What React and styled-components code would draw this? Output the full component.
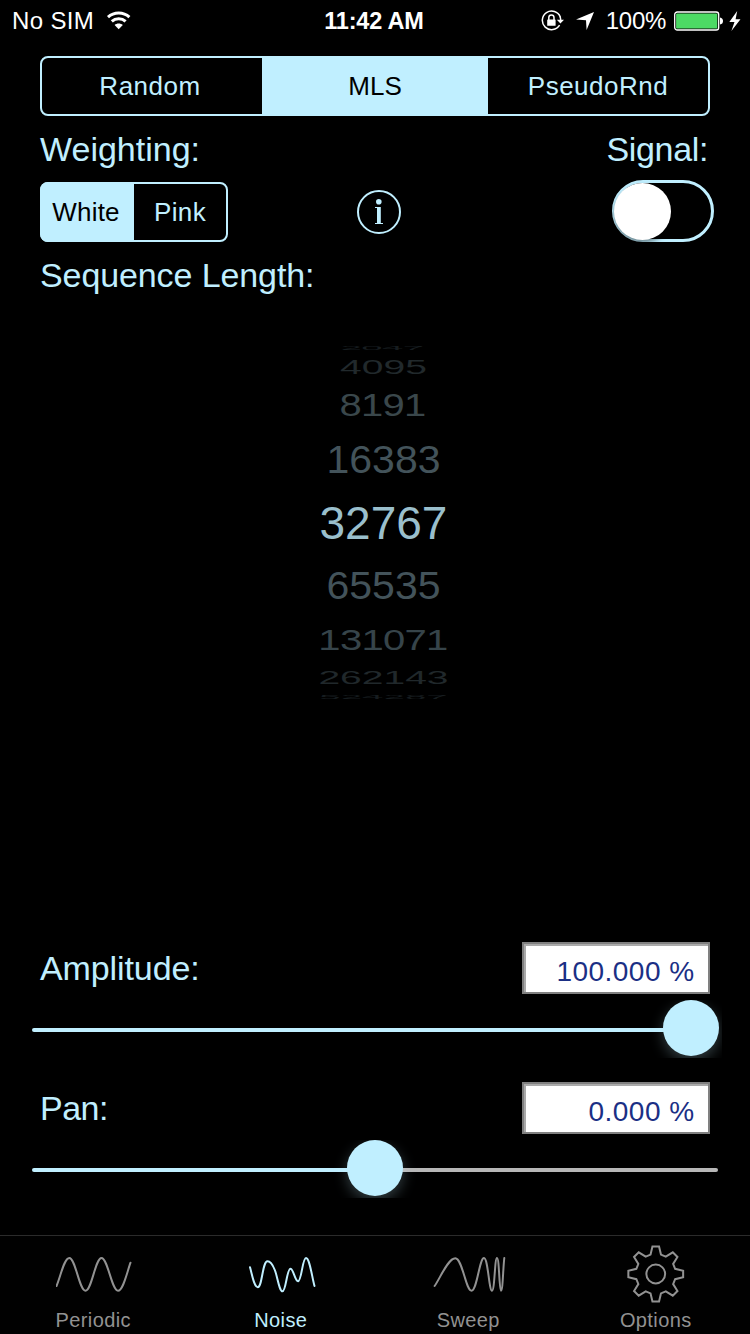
import React from "react";
import styled, { createGlobalStyle } from "styled-components";

const TINT = "#c0efff";
const MUTED = "#929292";

const GlobalStyle = createGlobalStyle`
  * { box-sizing: border-box; }
  body {
    margin: 0;
    background: #000;
    font-family: "Liberation Sans", Arial, sans-serif;
  }
`;

const Screen = styled.main`
  display: flex;
  flex-direction: column;
  width: 750px;
  height: 1334px;
  overflow: hidden;
  background: #000;
  color: ${TINT};
`;

const StatusBar = styled.header`
  display: grid;
  grid-template-columns: 1fr auto 1fr;
  align-items: center;
  height: 40px;
  padding: 2px 9px 0 12px;
  color: #fff;
  font-size: 24px;
  line-height: 38px;
`;

const StatusGroup = styled.div`
  display: flex;
  align-items: center;
  justify-content: ${(p) => (p.$end ? "flex-end" : "flex-start")};
  letter-spacing: ${(p) => (p.$end ? 0 : 0.35)}px;
`;

const Clock = styled.time`
  font-weight: 700;
  font-size: 23.5px;
  letter-spacing: -0.2px;
  padding-right: 5px;
`;

const WifiIcon = styled.svg`
  margin: 0 0 2px 12px;
`;

const StatusIcon = styled.svg`
  margin-right: ${(p) => p.$gap}px;
  margin-bottom: 1px;
`;

const Percent = styled.span`
  margin-right: 8px;
  letter-spacing: -0.3px;
`;

const Content = styled.section`
  display: flex;
  flex: 1;
  flex-direction: column;
  padding: 16px 40px 0;
`;

const Segments = styled.div`
  display: flex;
  width: ${(p) => p.$width}px;
  height: 60px;
  border: 2px solid ${TINT};
  border-radius: 8px;
`;

const Segment = styled.button`
  flex: ${(p) => (p.$width ? `0 0 ${p.$width}px` : "1")};
  padding: 0;
  border: 0;
  background: ${(p) => (p.$active ? TINT : "transparent")};
  color: ${(p) => (p.$active ? "#000" : TINT)};
  font: inherit;
  font-size: 26px;
  line-height: 56px;
  letter-spacing: ${(p) => p.$spacing ?? 0.4}px;

  &:first-child {
    flex-basis: ${(p) => p.$width + 2}px;
    margin: -2px 0 -2px -2px;
    padding-right: 2px;
    border-radius: 8px 0 0 8px;
  }
`;

const LabelRow = styled.div`
  display: flex;
  justify-content: space-between;
  align-items: center;
  height: ${(p) => p.$height}px;
  padding-right: ${(p) => p.$inset ?? 0}px;
`;

const Label = styled.span`
  font-size: 34px;
  line-height: 40px;
  letter-spacing: ${(p) => p.$spacing ?? 0}px;
`;

const ControlRow = styled.div`
  display: grid;
  grid-template-columns: 188px 1fr 102px;
  align-items: center;
  height: 60px;
  margin-right: -4px;
`;

const InfoButton = styled.svg`
  justify-self: center;
  margin-left: -82px;
`;

const Toggle = styled.div`
  display: flex;
  align-items: center;
  width: 102px;
  height: 62px;
  margin: -2px 0 0;
  border: 3px solid ${TINT};
  border-radius: 31px;
`;

const Knob = styled.div`
  flex: none;
  width: 57px;
  height: 57px;
  margin-left: -1px;
  border-radius: 50%;
  background: #fff;
  box-shadow: 0 3px 5px rgba(0, 0, 0, 0.45);
`;

const Picker = styled.div`
  display: flex;
  flex-direction: column;
  align-items: center;
  margin-top: 35.5px;
  padding-left: 17px;
  height: 598.5px;
`;

const PickerRow = styled.div`
  display: flex;
  align-items: center;
  justify-content: center;
  flex: none;
  height: ${(p) => p.$height}px;
  color: ${(p) => p.$color};
  font-size: ${(p) => p.$size}px;
  line-height: 0;
`;

const PickerValue = styled.span`
  letter-spacing: ${(p) => p.$spacing}px;
  margin-right: ${(p) => p.$shift ?? 0}px;
  transform: scaleY(${(p) => p.$squash});
`;

const ValueBox = styled.output`
  width: 188px;
  height: 52px;
  padding-right: 13.5px;
  border: 2px solid #808080;
  background: #fff;
  box-shadow: inset 2px 2px 0 #aaa;
  color: #1b2f85;
  font-size: 28px;
  line-height: 55px;
  text-align: right;
  letter-spacing: 0.45px;
`;

const SliderArea = styled.div`
  position: relative;
  display: flex;
  align-items: center;
  height: 60px;
  margin: 6px -12px 22px -8px;
  padding-right: 4px;
`;

const ThumbLayer = styled.div`
  position: absolute;
  inset: 0 0 2px;
  overflow: hidden;
`;

const Track = styled.div`
  flex: 1;
  height: 4px;
  border-radius: 2px;
  background: linear-gradient(to right, ${TINT} ${(p) => p.$fill}%, #b7b7b7 ${(p) => p.$fill}%);
`;

const Thumb = styled.div`
  width: 56px;
  height: 56px;
  margin-left: ${(p) => p.$left}px;
  border-radius: 50%;
  background: ${TINT};
  box-shadow: 0 5px 14px rgba(192, 239, 255, 0.26);
`;

const TabBar = styled.nav`
  display: grid;
  grid-template-columns: repeat(4, 1fr);
  height: 99px;
  border-top: 1px solid #2b2b2b;
  background: #010101;
`;

const Tab = styled.div`
  display: flex;
  flex-direction: column;
  align-items: center;
  padding-top: 8px;
  color: ${(p) => (p.$active ? TINT : MUTED)};
  font-size: 20px;
  line-height: 24px;
  letter-spacing: 0.4px;
`;

const TabIcon = styled.svg`
  margin-bottom: 4px;
  fill: none;
  stroke: currentColor;
  stroke-width: 2;
  stroke-linecap: round;
`;

const TabName = styled.span`
  margin-right: 1px;
`;

const PICKER_ROWS = [
  { value: "2047", height: 8.6, size: 38.5, squash: 0.15, color: "#161c1f", spacing: -0.6, shift: 3 },
  { value: "4095", height: 29.4, size: 39, squash: 0.5, color: "#21292c", spacing: 0 },
  { value: "8191", height: 47.6, size: 40, squash: 0.77, color: "#3a474b", spacing: -0.8, shift: 2 },
  { value: "16383", height: 61.4, size: 41, squash: 0.95, color: "#43535a", spacing: 0 },
  { value: "32767", height: 65, size: 46, squash: 1, color: "#9abfcc", spacing: 0 },
  { value: "65535", height: 60.4, size: 41, squash: 0.95, color: "#43535a", spacing: 0 },
  { value: "131071", height: 46.6, size: 40, squash: 0.76, color: "#36444a", spacing: -0.7, shift: 1 },
  { value: "262143", height: 30.4, size: 39, squash: 0.49, color: "#20282b", spacing: 0 },
  { value: "524287", height: 8.6, size: 38.5, squash: 0.15, color: "#161c1f", spacing: 0 },
];

const TOOTH = [
  [-5.2, -19.4],
  [-3.3, -27.4],
  [3.3, -27.4],
  [5.2, -19.4],
];

const gearPoints = Array.from({ length: 8 }, (_, i) => {
  const a = (i * Math.PI) / 4;
  return TOOTH.map(
    ([x, y]) =>
      `${(37.75 + x * Math.cos(a) - y * Math.sin(a)).toFixed(2)},${(30 + x * Math.sin(a) + y * Math.cos(a)).toFixed(2)}`
  ).join(" ");
}).join(" ");

const TABS = [
  {
    name: "Periodic",
    icon: <path d="M.5 42C4.5 33 8 14 13.3 14C19.5 14 23.3 46.7 29.5 46.7S39.3 14 45.5 14S55.8 46.7 62 46.7C67 46.7 70.5 30 74.5 18.7" />,
  },
  {
    name: "Noise",
    active: true,
    icon: <path d="M7 23.3C9.2 31 11.2 43.3 14.8 43.3C19.2 43.3 19.4 17.3 24.5 17.3C27.5 17.3 30 21.5 31.8 26C34.5 33 36.3 47.3 39.5 47.3C43 47.3 43.8 24.7 47.5 24.7C50.4 24.7 52 37.3 55 37.3C58.6 37.3 59.4 14 63 14C66.6 14 69 33 71.5 42" />,
  },
  {
    name: "Sweep",
    icon: <path d="M3.6 42C9 34.5 17 14.3 24.3 14.3C31.5 14.3 34.7 46.7 40.5 46.7C46 46.7 48.4 14 53 14C57 14 58 46.7 61 46.7C63.8 46.7 63.6 14 66 14C68.3 14 68.2 46.7 70 46.7C71.8 46.7 72 25 73.3 14" />,
  },
  {
    name: "Options",
    icon: (
      <>
        <polygon points={gearPoints} />
        <circle cx="37.75" cy="30" r="9.4" />
      </>
    ),
  },
];

function Slider({ fill, thumb }) {
  return (
    <SliderArea>
      <Track $fill={fill} />
      <ThumbLayer>
        <Thumb $left={thumb} />
      </ThumbLayer>
    </SliderArea>
  );
}

export default function App() {
  return (
    <Screen>
      <GlobalStyle />
      <StatusBar>
        <StatusGroup>
          No SIM
          <WifiIcon width="26" height="19" viewBox="0 0 26 19" fill="none" stroke="#fff" strokeWidth="3">
            <path d="M2 6.2C8 .7 17.4 .7 23.4 6.2" />
            <path d="M5.8 10.4C9.6 6.9 15.8 6.9 19.6 10.4" />
            <path d="M12.7 18.2L8.6 13.9C10.8 11.9 14.6 11.9 16.8 13.9Z" fill="#fff" stroke="none" />
          </WifiIcon>
        </StatusGroup>
        <Clock>11:42 AM</Clock>
        <StatusGroup $end>
          <StatusIcon $gap={12} width="23" height="22" viewBox="0 0 23 22" fill="none" stroke="#fff" strokeWidth="1.5">
            <path d="M18.6 15.2A9.3 9.3 0 1 1 19.3 7" />
            <path d="M19 6.6Q19.7 8.4 19.7 10.5" />
            <path d="M15.8 9.8H23L19.4 13.6Z" fill="#fff" stroke="none" />
            <rect x="6.2" y="9.5" width="8.4" height="6.3" rx=".6" fill="#fff" stroke="none" />
            <path d="M7.8 10V7.5a2.6 2.6 0 0 1 5.2 0V10" />
          </StatusIcon>
          <StatusIcon $gap={12} width="18" height="18" viewBox="0 0 18 18" fill="#fff">
            <path d="M18 0L10.6 18L10 8.2L0 7.5Z" />
          </StatusIcon>
          <Percent>100%</Percent>
          <StatusIcon $gap={6} width="49" height="20" viewBox="0 0 49 20">
            <rect x=".7" y="1" width="44" height="18" rx="2.6" fill="none" stroke="#fff" strokeWidth="1.3" />
            <rect x="2.1" y="2.4" width="41.2" height="15.2" rx="1.2" fill="#4cd964" />
            <path d="M46 6.5Q49 7 49 10T46 13.5Z" fill="#fff" />
          </StatusIcon>
          <StatusIcon $gap={0} width="12" height="20" viewBox="0 0 12 20" fill="#fff">
            <path d="M8.2 0L.3 11H5.5L2.4 20L11.5 8.3H6.6Z" />
          </StatusIcon>
        </StatusGroup>
      </StatusBar>

      <Content>
        <Segments $width={670}>
          <Segment $width={220} $spacing={0.5}>Random</Segment>
          <Segment $active $width={226} $spacing={0}>MLS</Segment>
          <Segment $width={220} $spacing={0.5}>PseudoRnd</Segment>
        </Segments>

        <LabelRow $height={66} $inset={2}>
          <Label>Weighting:</Label>
          <Label $spacing={-0.35}>Signal:</Label>
        </LabelRow>

        <ControlRow>
          <Segments $width={188}>
            <Segment $active $width={92} $spacing={0.2}>White</Segment>
            <Segment>Pink</Segment>
          </Segments>
          <InfoButton width="44" height="44" viewBox="0 0 44 44" fill={TINT}>
            <circle cx="22" cy="22" r="21" fill="none" stroke={TINT} strokeWidth="2" />
            <circle cx="21.8" cy="11.8" r="2.8" />
            <path d="M18 17H23.8V33H26V34H18V33H20V18H18Z" />
          </InfoButton>
          <Toggle>
            <Knob />
          </Toggle>
        </ControlRow>

        <LabelRow $height={66}>
          <Label $spacing={-0.1}>Sequence Length:</Label>
        </LabelRow>

        <Picker>
          {PICKER_ROWS.map((row) => (
            <PickerRow key={row.value} $height={row.height} $size={row.size} $color={row.color}>
              <PickerValue $squash={row.squash} $spacing={row.spacing} $shift={row.shift}>{row.value}</PickerValue>
            </PickerRow>
          ))}
        </Picker>

        <LabelRow $height={52}>
          <Label $spacing={-0.1}>Amplitude:</Label>
          <ValueBox>100.000 %</ValueBox>
        </LabelRow>
        <Slider fill={100} thumb={631} />

        <LabelRow $height={52}>
          <Label $spacing={-0.5}>Pan:</Label>
          <ValueBox>0.000 %</ValueBox>
        </LabelRow>
        <Slider fill={50} thumb={315} />
      </Content>

      <TabBar>
        {TABS.map((tab) => (
          <Tab key={tab.name} $active={tab.active}>
            <TabIcon width="76" height="60" viewBox="0 0 76 60">
              {tab.icon}
            </TabIcon>
            <TabName>{tab.name}</TabName>
          </Tab>
        ))}
      </TabBar>
    </Screen>
  );
}
